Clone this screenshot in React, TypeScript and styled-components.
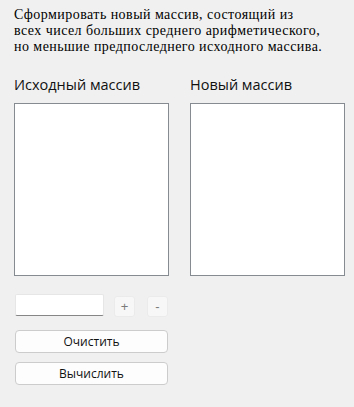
import React from 'react';
import styled, { createGlobalStyle } from 'styled-components';

const Global = createGlobalStyle`
  html, body {
    margin: 0;
    padding: 0;
    background: #f0f0f0;
  }
`;

const Page = styled.div`
  width: 354px;
  height: 407px;
  box-sizing: border-box;
  padding: 7px 0 0 14px;
  background: #f0f0f0;
  font-family: 'Liberation Sans', Arial, sans-serif;
  color: #000;
`;

const Description = styled.p`
  margin: 0;
  font-family: 'Liberation Serif', 'Times New Roman', serif;
  font-size: 14px;
  line-height: 16px;
  letter-spacing: 0.45px;
  white-space: pre-line;
`;

const Columns = styled.div`
  display: flex;
  gap: 21px;
  margin-top: 21px;
`;

const Column = styled.div`
  display: flex;
  flex-direction: column;
  width: 155px;
`;

const Label = styled.div`
  font-family: 'Open Sans', 'Liberation Sans', sans-serif;
  font-size: 14.5px;
  line-height: 18px;
  color: #111;
  margin-bottom: 9px;
`;

const ListBox = styled.div`
  box-sizing: border-box;
  height: 173px;
  background: #fff;
  border: 1px solid #868a91;
`;

const Controls = styled.div`
  display: flex;
  flex-direction: column;
  width: 153px;
  margin: 18px 0 0 1px;
`;

const InputRow = styled.div`
  display: flex;
  align-items: flex-start;
`;

const NumberInput = styled.input`
  box-sizing: border-box;
  width: 89px;
  height: 22px;
  margin: 0;
  padding: 0 4px;
  border: 1px solid #e6e6e6;
  border-bottom: 1px solid #868686;
  border-radius: 2px;
  background: #fff;
  outline: none;
`;

const StepButton = styled.button`
  box-sizing: border-box;
  width: 21px;
  height: 21px;
  margin: 2px 0 0 ${(p: { $gap: number }) => p.$gap}px;
  padding: 0;
  border: 1px solid #ebebeb;
  border-radius: 3px;
  background: #f7f7f7;
  color: #7a7a7a;
  font-family: 'Liberation Sans', Arial, sans-serif;
  font-size: 13px;
  line-height: 19px;
`;

const ActionButton = styled.button`
  box-sizing: border-box;
  width: 153px;
  height: 23px;
  margin-top: ${(p: { $top: number }) => p.$top}px;
  padding: 0;
  border: 1px solid #cccccc;
  border-radius: 4px;
  background: #fdfdfd;
  color: #111;
  font-family: 'Open Sans', 'Liberation Sans', sans-serif;
  font-size: 12px;
  line-height: 21px;
`;

const App = () => (
  <Page>
    <Global />
    <Description>
      {'Сформировать новый массив, состоящий из\nвсех чисел больших среднего арифметического,\nно меньшие предпоследнего исходного массива.'}
    </Description>
    <Columns>
      <Column>
        <Label>Исходный массив</Label>
        <ListBox />
      </Column>
      <Column>
        <Label>Новый массив</Label>
        <ListBox />
      </Column>
    </Columns>
    <Controls>
      <InputRow>
        <NumberInput />
        <StepButton $gap={10}>+</StepButton>
        <StepButton $gap={12}>-</StepButton>
      </InputRow>
      <ActionButton $top={13}>Очистить</ActionButton>
      <ActionButton $top={9}>Вычислить</ActionButton>
    </Controls>
  </Page>
);

export default App;
